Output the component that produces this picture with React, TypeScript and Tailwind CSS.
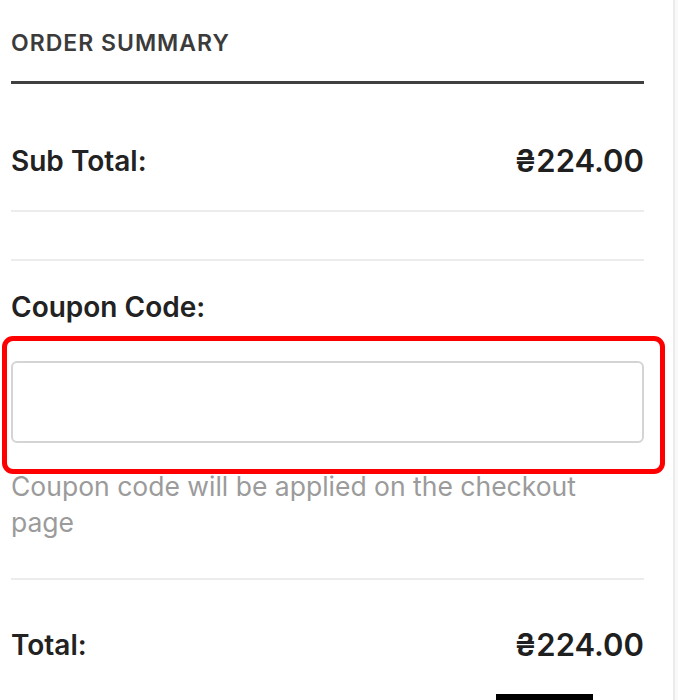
import React from "react";

const font = { fontFamily: "Inter, 'Noto Sans', 'DejaVu Sans', sans-serif" };

function Row({ label, value }: { label: string; value: string }) {
  return (
    <div className="flex items-center justify-between">
      <span className="text-[28px] leading-[30px] font-semibold text-[#222222]">{label}</span>
      <span className="text-[31px] leading-[30px] font-semibold text-[#1f1f1f]">{value}</span>
    </div>
  );
}

export default function App() {
  return (
    <div className="min-h-screen bg-[#f9f9f9]" style={font}>
      <div className="w-[675px] h-[700px] overflow-hidden bg-white border-r-2 border-[#ebebeb] pl-[11px] pr-[29px]">
        {/* heading */}
        <h2 className="pt-[29px] text-[23px] leading-[28px] font-semibold tracking-[1px] text-[#3b3b3b]">
          ORDER SUMMARY
        </h2>
        <div className="mt-[24px] h-[3px] bg-[#404040]" />

        {/* sub total */}
        <div className="pt-[62px] pb-[34px] border-b-2 border-[#ececec]">
          <Row label="Sub Total:" value="₴224.00" />
        </div>

        {/* empty shipping slot */}
        <div className="h-[49px] border-b-2 border-[#ececec]" />

        {/* coupon */}
        <div className="pt-[31px] pb-[38px] border-b-2 border-[#ececec]">
          <label className="block text-[28px] leading-[30px] font-semibold text-[#222222]">
            Coupon Code:
          </label>
          <div className="relative mt-[39px]">
            <input
              type="text"
              className="block w-full h-[82px] rounded-[6px] border-2 border-[#d4d4d4] bg-white px-4 outline-none"
            />
            {/* highlight overlay */}
            <div className="pointer-events-none absolute -left-[9px] -right-[21px] -top-[25px] -bottom-[31px] rounded-[11px] border-[5px] border-[#ff0000]" />
          </div>
          <p className="mt-[25px] max-w-[600px] text-[26.5px] leading-[36px] text-[#9b9b9b]">
            Coupon code will be applied on the checkout page
          </p>
        </div>

        {/* total */}
        <div className="pt-[50px]">
          <Row label="Total:" value="₴224.00" />
        </div>

        <div className="flex justify-end mt-[34px] pr-[51px]">
          <button className="w-[97px] h-[50px] bg-black" />
        </div>
      </div>
    </div>
  );
}
